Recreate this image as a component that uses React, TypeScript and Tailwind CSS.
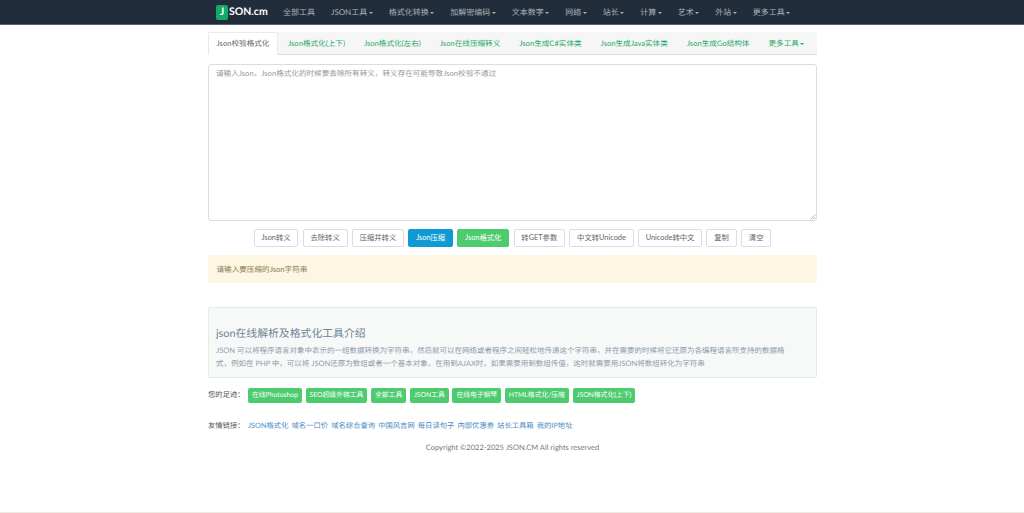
const FONT = "font-['Lato','Noto_Sans_CJK_SC',sans-serif] [text-rendering:geometricPrecision]";

const navItems = [
  { label: '全部工具' },
  { label: 'JSON工具', caret: true },
  { label: '格式化转换', caret: true },
  { label: '加解密编码', caret: true },
  { label: '文本数字', caret: true },
  { label: '网络', caret: true },
  { label: '站长', caret: true },
  { label: '计算', caret: true },
  { label: '艺术', caret: true },
  { label: '外站', caret: true },
  { label: '更多工具', caret: true },
];

const tabs = ['Json格式化(上下)', 'Json格式化(左右)', 'Json在线压缩转义', 'Json生成C#实体类', 'Json生成Java实体类', 'Json生成Go结构体'];

const actions = [
  { label: 'Json转义' },
  { label: '去除转义' },
  { label: '压缩并转义' },
  { label: 'Json压缩', className: 'bg-[#0f9ad3] border-[#0f9ad3] text-white' },
  { label: 'Json格式化', className: 'bg-[#4ccb6f] border-[#4ccb6f] text-white' },
  { label: '转GET参数' },
  { label: '中文转Unicode' },
  { label: 'Unicode转中文' },
  { label: '复制' },
  { label: '清空' },
];

const footprints = ['在线Photoshop', 'SEO超级外链工具', '全部工具', 'JSON工具', '在线电子钢琴', 'HTML格式化/压缩', 'JSON格式化(上下)'];
const friends = ['JSON格式化', '域名一口价', '域名综合查询', '中国风吉网', '每日读句子', '内部优惠券', '站长工具箱', '我的IP地址'];

function Caret({ className }: { className: string }) {
  return <span className={`ml-[1.5px] inline-block w-0 h-0 align-middle border-x-[2.5px] border-x-transparent border-t-[2.5px] ${className}`} />;
}

export default function App() {
  return (
    <div className={`${FONT} h-[513px] bg-white text-[8px] text-[#555] overflow-hidden flex flex-col`}>
      <nav className="h-[25px] bg-[#222d3b] border-b border-b-[#59636f] flex items-center pl-[216px]">
        <div className="flex items-center w-[67px]">
          <span className="w-[12px] h-[15px] rounded-[2px] bg-[#16a866] text-white text-[10.5px] font-bold flex items-center justify-center leading-none">J</span>
          <span className="ml-[1px] text-white text-[10.5px] font-bold leading-none">SON.cm</span>
        </div>
        <div className="flex gap-[16px] text-[#a9b0b8]">
          {navItems.map((item) => (
            <span key={item.label} className="whitespace-nowrap">
              {item.label}
              {item.caret && <Caret className="border-t-[#a9b0b8]" />}
            </span>
          ))}
        </div>
      </nav>

      <main className="w-[609px] ml-[208px] flex flex-col flex-1">
        <div className="mt-[7px] h-[22.5px] flex items-stretch text-[7.6px] bg-[#f6f6f6] border-b border-b-[#dddddd]">
          <div className="w-[70px] -mb-px pt-[1px] bg-white border border-[#e9e9e9] border-b-white rounded-t-[2px] flex items-center justify-center text-[#666]">Json校验格式化</div>
          <div className="flex flex-1 items-center text-[#1eaa6b] pl-[10px] pt-[1px] gap-[19px] whitespace-nowrap">
            {tabs.map((tab) => (
              <span key={tab}>{tab}</span>
            ))}
            <span>
              更多工具
              <Caret className="border-t-[#1eaa6b]" />
            </span>
          </div>
        </div>

        <div className="relative mt-[9px] h-[157px]">
          <textarea
            className={`${FONT} block h-full w-full resize-none border border-[#dddddd] rounded-[3px] px-[7px] py-[3px] text-[7.6px] leading-[11px] outline-none placeholder:text-[#999]`}
            placeholder="请输入Json，Json格式化的时候要去除所有转义，转义存在可能导致Json校验不通过"
          />
          <svg className="absolute right-[1px] bottom-[1px]" width="6" height="6" viewBox="0 0 6 6">
            <path d="M0.5 5.5L5.5 0.5M3 5.5L5.5 3" stroke="#999" strokeWidth="0.7" fill="none" />
          </svg>
        </div>

        <div className="mt-[8px] flex justify-center gap-[4.3px]">
          {actions.map((a) => (
            <button
              key={a.label}
              className={`h-[18.5px] px-[6.8px] pt-[1px] rounded-[2px] border text-[7.33px] whitespace-nowrap ${a.className ?? 'bg-white border-[#dddddd] text-[#666]'}`}
            >
              {a.label}
            </button>
          ))}
        </div>

        <div className="mt-[8px] h-[28px] bg-[#fdf6e3] rounded-[2px] flex items-center pl-[8.5px] pt-[1px] text-[7.6px] text-[#8a7a55]">请输入要压缩的Json字符串</div>

        <div className="mt-[24px] h-[71px] bg-[#f7f9f8] border border-[#dfeedd] rounded-[2px] pl-[7px] pr-[28px] pt-[19px]">
          <h2 className="text-[10.85px] font-normal leading-[13px] text-[#6e8296]">json在线解析及格式化工具介绍</h2>
          <p className="mt-[5px] text-[7.5px] leading-[12.8px] text-[#8c9aa8]">
            JSON 可以将程序语言对象中表示的一组数据转换为字符串，然后就可以在网络或者程序之间轻松地传递这个字符串，并在需要的时候将它还原为各编程语言所支持的数据格式，例如在 PHP 中，可以将 JSON还原为数组或者一个基本对象。在用到AJAX时，如果需要用到数组传值，这时就需要用JSON将数组转化为字符串
          </p>
        </div>

        <div className="mt-[10px] flex items-center text-[7.33px]">
          <span className="w-[40px] text-[#555]">您的足迹：</span>
          <div className="flex gap-[3.7px] text-[6.8px]">
            {footprints.map((f) => (
              <span key={f} className="h-[14.5px] px-[4px] rounded-[2px] bg-[#4ccb6f] text-white flex items-center whitespace-nowrap">{f}</span>
            ))}
          </div>
        </div>

        <div className="mt-[17px] flex items-center leading-[12px] text-[7.33px]">
          <span className="w-[40px] text-[#555]">友情链接：</span>
          <div className="flex gap-[3px] text-[#4a8bc2]">
            {friends.map((f) => (
              <span key={f} className="whitespace-nowrap">{f}</span>
            ))}
          </div>
        </div>

        <p className="mt-[10px] text-center text-[7.5px] text-[#777] leading-[11px]">Copyright ©2022-2025 JSON.CM All rights reserved</p>
      </main>
      <div className="h-px bg-[#efe9e2]" />
    </div>
  );
}
